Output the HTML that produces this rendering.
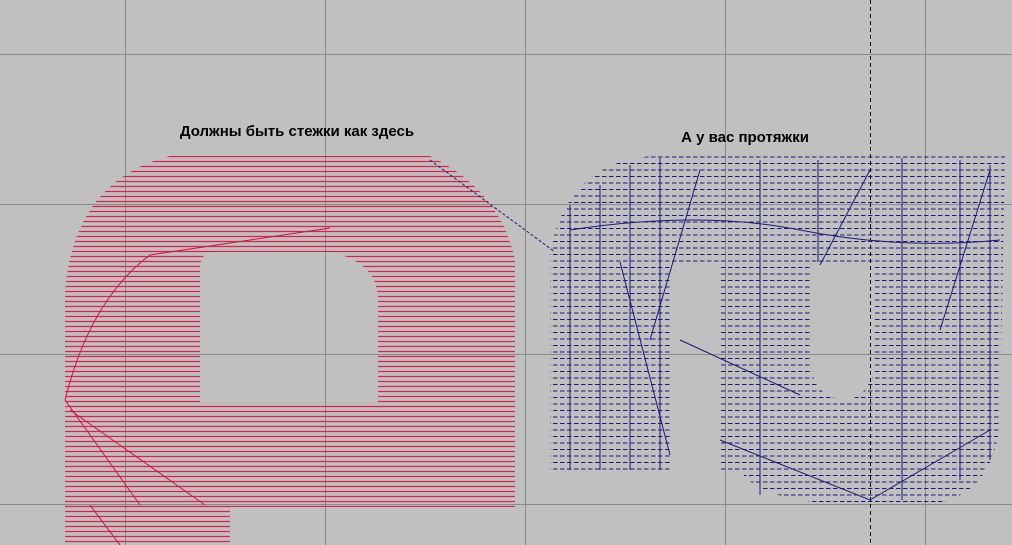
<!DOCTYPE html>
<html><head><meta charset="utf-8"><style>
html,body{margin:0;padding:0;background:#c0c0c0;width:1012px;height:545px;overflow:hidden}
svg{display:block}
</style></head><body>
<svg width="1012" height="545" viewBox="0 0 1012 545" xmlns="http://www.w3.org/2000/svg">
<defs>
<pattern id="red" width="1012" height="5" patternUnits="userSpaceOnUse">
<line x1="0" y1="1.5" x2="1012" y2="1.5" stroke="#e0204c" stroke-width="1.2"/>
</pattern>
<pattern id="blue" width="7" height="6.5" patternUnits="userSpaceOnUse">
<line x1="0" y1="1" x2="4.5" y2="1" stroke="#1c1a78" stroke-width="1"/>
</pattern>
</defs>
<g stroke="#8a8a8a" stroke-width="1">
<line x1="125.5" y1="0" x2="125.5" y2="545"/><line x1="325.5" y1="0" x2="325.5" y2="545"/>
<line x1="525.5" y1="0" x2="525.5" y2="545"/><line x1="725.5" y1="0" x2="725.5" y2="545"/>
<line x1="925.5" y1="0" x2="925.5" y2="545"/>
<line x1="0" y1="54.5" x2="1012" y2="54.5"/><line x1="0" y1="204.5" x2="1012" y2="204.5"/>
<line x1="0" y1="354.5" x2="1012" y2="354.5"/><line x1="0" y1="504.5" x2="1012" y2="504.5"/>
</g>
<line x1="870.5" y1="0" x2="870.5" y2="545" stroke="#000" stroke-dasharray="4,3"/>
<path fill="url(#red)" fill-rule="evenodd" d="M170 156 L430 156 Q500 190 515 260 L515 507 L230 507 L230 545 L65 545 L65 290 Q75 180 170 156 Z
M215 252 L330 252 Q378 262 378 300 L378 402 L200 402 L200 268 Q200 252 215 252 Z"/>
<g stroke="#d01040" stroke-width="1" fill="none">
<path d="M65 400 Q90 300 150 255 L330 228"/>
<path d="M65 400 L140 505 M70 410 L205 505 M90 505 L120 545"/>
</g>
<line x1="430" y1="160" x2="555" y2="252" stroke="#1c1a78" stroke-width="1" stroke-dasharray="3,2"/>
<path fill="url(#blue)" fill-rule="evenodd" d="M655 156 L1005 156 L1000 420 Q995 495 930 505 L870 505 Q760 505 740 470 L720 470 L720 262 L672 262 L672 472 L550 472 L550 250 Q570 160 655 156 Z
M812 262 L875 262 L875 370 Q865 400 843 400 Q815 395 812 370 Z"/>
<g stroke="#1c1a78" stroke-width="1" fill="none">
<path d="M570 205 L570 470 M600 185 L600 470 M630 165 L630 470 M660 158 L660 470 M760 160 L760 495 M818 160 L818 262 M902 158 L902 500 M960 160 L960 480 M990 165 L990 460"/>
<path d="M570 230 Q700 210 800 230 Q900 250 1000 240"/>
<path d="M620 262 L670 455 M700 170 L650 340 M870 170 L820 265 M990 170 L940 330 M720 440 L870 500 L990 430 M680 340 L800 395"/>
</g>
<text x="297" y="136" font-family="Liberation Sans, sans-serif" font-size="15" font-weight="bold" text-anchor="middle" fill="#000">Должны быть стежки как здесь</text>
<text x="745" y="142" font-family="Liberation Sans, sans-serif" font-size="15" font-weight="bold" text-anchor="middle" fill="#000">А у вас протяжки</text>
</svg>
</body></html>
